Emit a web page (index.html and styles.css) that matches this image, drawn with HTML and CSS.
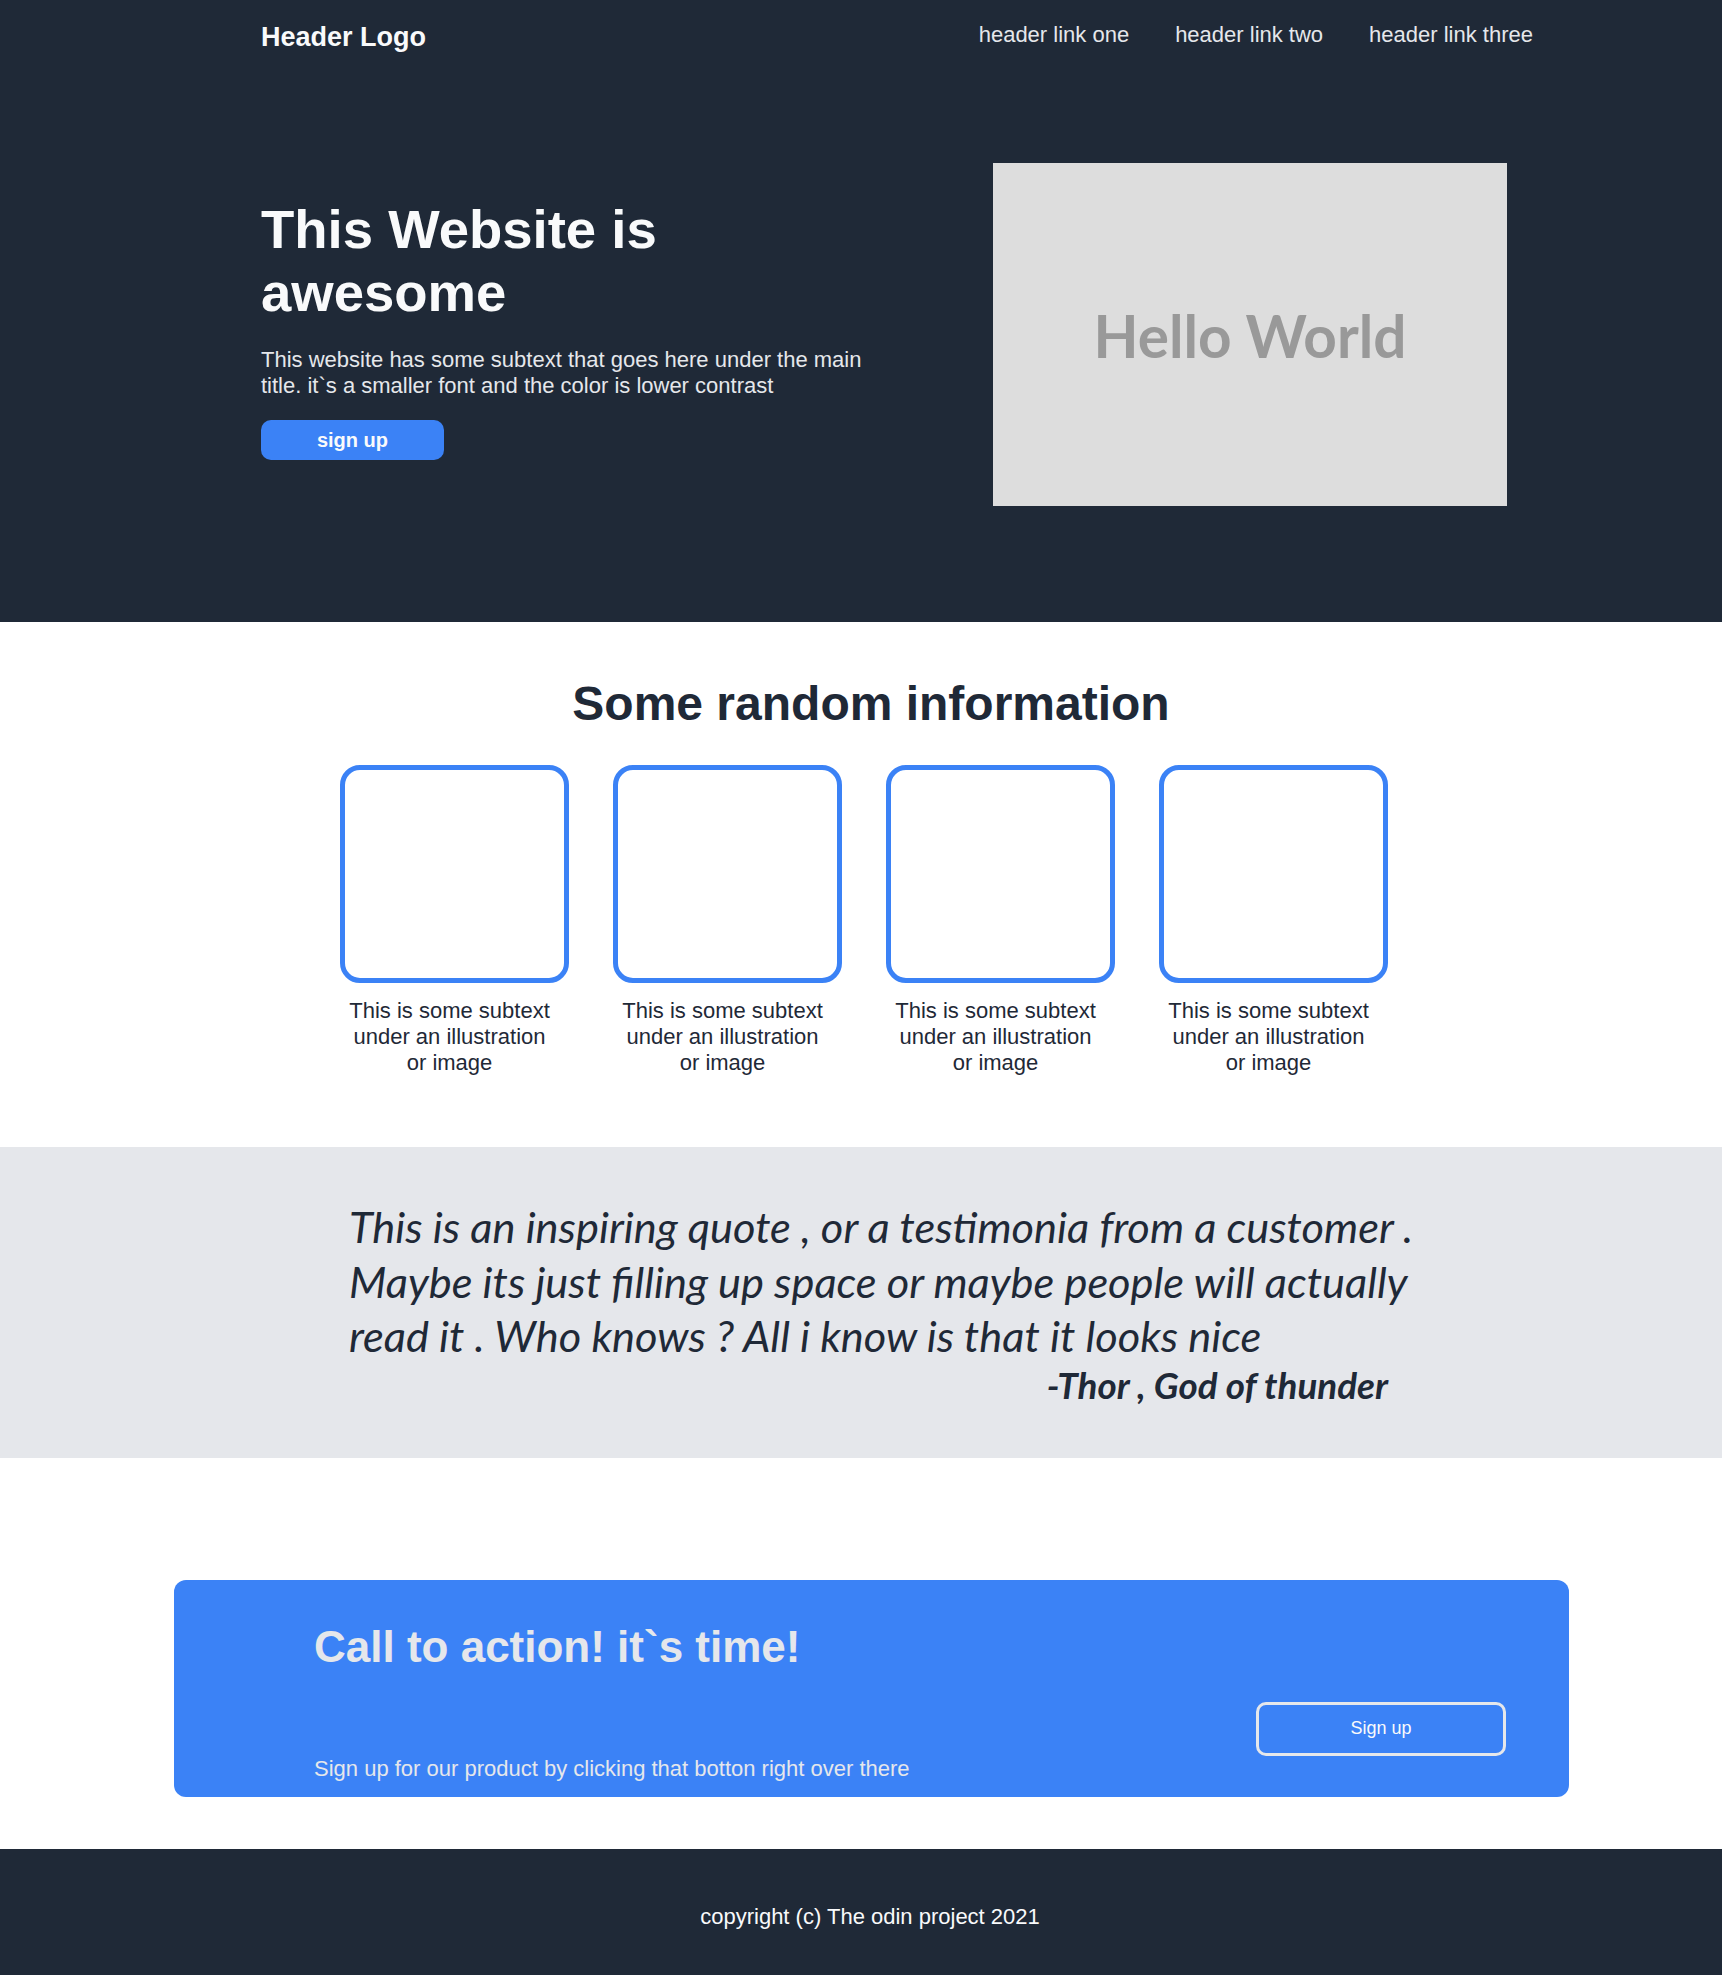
FILE: index.html
```html
<!DOCTYPE html>
<html lang="en">
<head>
<meta charset="utf-8">
<title>Landing Page</title>
<link rel="stylesheet" href="styles.css">
</head>
<body>
<header class="top">
  <nav class="nav">
    <div class="logo">Header Logo</div>
    <ul class="links">
      <li><a href="#">header link one</a></li>
      <li><a href="#">header link two</a></li>
      <li><a href="#">header link three</a></li>
    </ul>
  </nav>
  <section class="hero">
    <div class="hero-text">
      <h1>This Website is awesome</h1>
      <p>This website has some subtext that goes here under the main title. it`s a smaller font and the color is lower contrast</p>
      <a class="btn" href="#">sign up</a>
    </div>
    <div class="hero-image">Hello World</div>
  </section>
</header>

<section class="info">
  <h2>Some random information</h2>
  <div class="cards">
    <div class="card">
      <div class="card-box"></div>
      <p>This is some subtext under an illustration or image</p>
    </div>
    <div class="card">
      <div class="card-box"></div>
      <p>This is some subtext under an illustration or image</p>
    </div>
    <div class="card">
      <div class="card-box"></div>
      <p>This is some subtext under an illustration or image</p>
    </div>
    <div class="card">
      <div class="card-box"></div>
      <p>This is some subtext under an illustration or image</p>
    </div>
  </div>
</section>

<section class="quote">
  <blockquote class="quote-block">
    <p class="quote-text">This is an inspiring quote , or a testimonia from a customer . Maybe its just filling up space or maybe people will actually read it . Who knows ? All i know is that it looks nice</p>
    <p class="quote-author">-Thor , God of thunder</p>
  </blockquote>
</section>

<section class="cta-wrap">
  <div class="cta">
    <div class="cta-text">
      <h3>Call to action! it`s time!</h3>
      <p>Sign up for our product by clicking that botton right over there</p>
    </div>
    <a class="cta-btn" href="#">Sign up</a>
  </div>
</section>

<footer class="footer">copyright (c) The odin project 2021</footer>
</body>
</html>
```
FILE: styles.css
```css
body {
  margin: 0;
  font-family: "Liberation Sans", Arial, sans-serif;
  background: #ffffff;
}

/* ---------- header + hero ---------- */
.top {
  background: #1f2937;
}

.nav {
  display: flex;
  justify-content: space-between;
  align-items: flex-start;
  padding: 22px 189px 0 261px;
}

.logo {
  font-size: 27px;
  font-weight: 700;
  color: #f9fafb;
}

.links {
  display: flex;
  gap: 46px;
  list-style: none;
  margin: 0;
  padding: 0;
  font-size: 22px;
}

.links a {
  color: #e5e7eb;
  text-decoration: none;
}

.hero {
  display: flex;
  justify-content: space-between;
  align-items: center;
  padding: 110px 215px 116px 261px;
}

.hero-text {
  width: 620px;
  padding-bottom: 12px;
}

.hero-text h1 {
  margin: 0;
  font-size: 54.5px;
  line-height: 63px;
  font-weight: 700;
  color: #f9fafb;
}

.hero-text p {
  margin: 23px 0 21px;
  font-size: 22px;
  line-height: 26px;
  color: #e5e7eb;
}

.btn {
  display: block;
  width: 183px;
  height: 40px;
  line-height: 40px;
  text-align: center;
  background: #3b82f6;
  border-radius: 10px;
  color: #f9fafb;
  font-size: 20px;
  font-weight: 700;
  text-decoration: none;
}

.hero-image {
  width: 514px;
  height: 343px;
  background: #dddddd;
  display: flex;
  align-items: center;
  justify-content: center;
  font-family: Lato, "Liberation Sans", sans-serif;
  font-weight: 700;
  font-size: 58.5px;
  color: #999999;
}

/* ---------- info ---------- */
.info {
  padding: 54px 0 71px;
}

.info h2 {
  margin: 0;
  padding-left: 20px;
  text-align: center;
  font-size: 48px;
  font-weight: 700;
  color: #1f2937;
}

.cards {
  display: flex;
  justify-content: center;
  gap: 54px;
  margin-top: 34px;
  padding-right: 4px;
}

.card {
  width: 219px;
}

.card-box {
  width: 229px;
  height: 218px;
  box-sizing: border-box;
  border: 5px solid #3b82f6;
  border-radius: 20px;
}

.card p {
  margin: 15px 5px 0;
  font-size: 22px;
  text-align: center;
  color: #1f2937;
}

/* ---------- quote ---------- */
.quote {
  background: #e5e7eb;
  padding: 52.4px 0 51px;
}

.quote-block {
  margin: 0 0 0 349px;
  width: 1080px;
  font-family: Lato, "Liberation Sans", sans-serif;
  color: #1f2937;
}

.quote-text {
  margin: 0;
  font-style: italic;
  font-weight: 400;
  font-size: 43.4px;
  line-height: 54.5px;
}

.quote-author {
  margin: 0;
  padding-right: 41px;
  text-align: right;
  font-style: italic;
  font-weight: 700;
  font-size: 36.8px;
}

/* ---------- call to action ---------- */
.cta-wrap {
  padding: 122px 153px 52px 174px;
}

.cta {
  display: flex;
  justify-content: space-between;
  background: #3b82f6;
  border-radius: 12px;
  padding: 42.5px 63px 15px 140px;
}

.cta-text h3 {
  margin: 0;
  font-size: 44px;
  font-weight: 700;
  color: #e5e7eb;
}

.cta-text p {
  margin: 83.6px 0 0;
  font-size: 22px;
  color: #e5e7eb;
}

.cta-btn {
  align-self: flex-end;
  margin-bottom: 26px;
  width: 250px;
  height: 54px;
  box-sizing: border-box;
  border: 3px solid #e5e7eb;
  border-radius: 10px;
  display: flex;
  align-items: center;
  justify-content: center;
  font-size: 18px;
  color: #f9fafb;
  text-decoration: none;
}

/* ---------- footer ---------- */
.footer {
  background: #1f2937;
  color: #f9fafb;
  font-size: 22px;
  text-align: center;
  padding: 55px 0 45px 18px;
}
```
